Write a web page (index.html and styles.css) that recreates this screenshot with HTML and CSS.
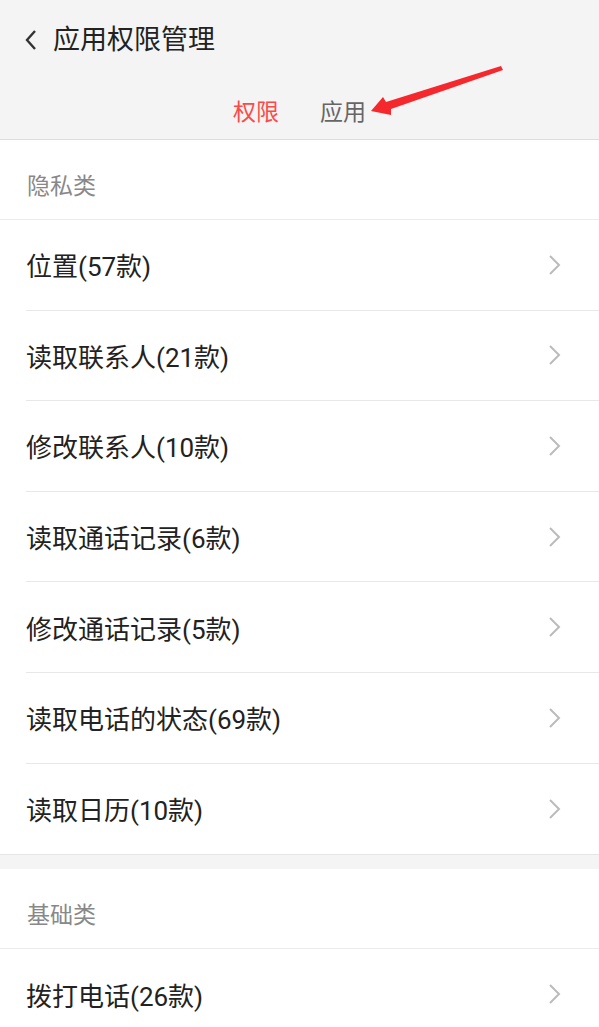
FILE: index.html
```html
<!DOCTYPE html>
<html lang="zh-CN">
<head>
    <meta charset="UTF-8">
    <meta name="viewport" content="width=device-width, initial-scale=1.0">
    <title>应用权限管理</title>
    <link rel="stylesheet" href="styles.css">
</head>
<body>
    <header class="topbar">
        <div class="titlebar">
            <svg class="back" width="14" height="22" viewBox="0 0 14 22">
                <polyline points="11,2 3,11 11,20" />
            </svg>
            <h1 class="title">应用权限管理</h1>
        </div>
        <nav class="tabs">
            <span class="tab active">权限</span>
            <span class="tab">应用</span>
        </nav>
        <svg class="arrow" width="140" height="60" viewBox="0 0 140 60">
            <polygon points="0,47 12,33 15,38 130,2 132,6 20,45 20,51" />
        </svg>
    </header>

    <section class="group">
        <div class="group-title">隐私类</div>
        <ul class="list">
            <li class="item"><span>位置(57款)</span><svg class="chev" width="14" height="22" viewBox="0 0 14 22"><polyline points="3,2 12,11 3,20" /></svg></li>
            <li class="item"><span>读取联系人(21款)</span><svg class="chev" width="14" height="22" viewBox="0 0 14 22"><polyline points="3,2 12,11 3,20" /></svg></li>
            <li class="item"><span>修改联系人(10款)</span><svg class="chev" width="14" height="22" viewBox="0 0 14 22"><polyline points="3,2 12,11 3,20" /></svg></li>
            <li class="item"><span>读取通话记录(6款)</span><svg class="chev" width="14" height="22" viewBox="0 0 14 22"><polyline points="3,2 12,11 3,20" /></svg></li>
            <li class="item"><span>修改通话记录(5款)</span><svg class="chev" width="14" height="22" viewBox="0 0 14 22"><polyline points="3,2 12,11 3,20" /></svg></li>
            <li class="item"><span>读取电话的状态(69款)</span><svg class="chev" width="14" height="22" viewBox="0 0 14 22"><polyline points="3,2 12,11 3,20" /></svg></li>
            <li class="item"><span>读取日历(10款)</span><svg class="chev" width="14" height="22" viewBox="0 0 14 22"><polyline points="3,2 12,11 3,20" /></svg></li>
        </ul>
    </section>

    <div class="gap"></div>

    <section class="group">
        <div class="group-title">基础类</div>
        <ul class="list">
            <li class="item"><span>拨打电话(26款)</span><svg class="chev" width="14" height="22" viewBox="0 0 14 22"><polyline points="3,2 12,11 3,20" /></svg></li>
        </ul>
    </section>
</body>
</html>
```

FILE: styles.css
```css
* {
    box-sizing: border-box;
}
body {
    margin: 0;
    background: #fff;
    font-family: Roboto, "Noto Sans CJK SC", sans-serif;
    color: #222;
    overflow: hidden;
}
.topbar {
    position: relative;
    background: #f4f4f4;
    border-bottom: 1px solid #dedede;
    height: 140px;
}
.titlebar {
    height: 80px;
    display: flex;
    align-items: center;
    padding-left: 24px;
}
.back {
    fill: none;
    stroke: #333;
    stroke-width: 2.4;
    margin-right: 15px;
}
.title {
    margin: 0;
    font-size: 27px;
    font-weight: normal;
    color: #222;
    line-height: 1;
}
.tabs {
    height: 59px;
    display: flex;
    justify-content: center;
    align-items: center;
    gap: 41px;
    font-size: 23px;
}
.tab {
    color: #666;
}
.tab.active {
    color: #fc4a4a;
}
.arrow {
    position: absolute;
    left: 371px;
    top: 64px;
    fill: #f5282d;
}
.group-title {
    height: 80px;
    padding: 35px 0 0 27px;
    font-size: 23px;
    line-height: 23px;
    color: #888;
    border-bottom: 1px solid #ebebeb;
}
.list {
    list-style: none;
    margin: 0;
    padding: 0 0 0 26px;
}
.item {
    height: 90.6px;
    display: flex;
    align-items: center;
    justify-content: space-between;
    padding: 0 38px 0 0;
    font-size: 26px;
    border-bottom: 1px solid #e8e8e8;
}
.item:last-child {
    border-bottom: none;
}
.chev {
    fill: none;
    stroke: #bbb;
    stroke-width: 2;
}
.gap {
    height: 15px;
    background: #f4f4f4;
    border-top: 1px solid #e6e6e6;
}
```
